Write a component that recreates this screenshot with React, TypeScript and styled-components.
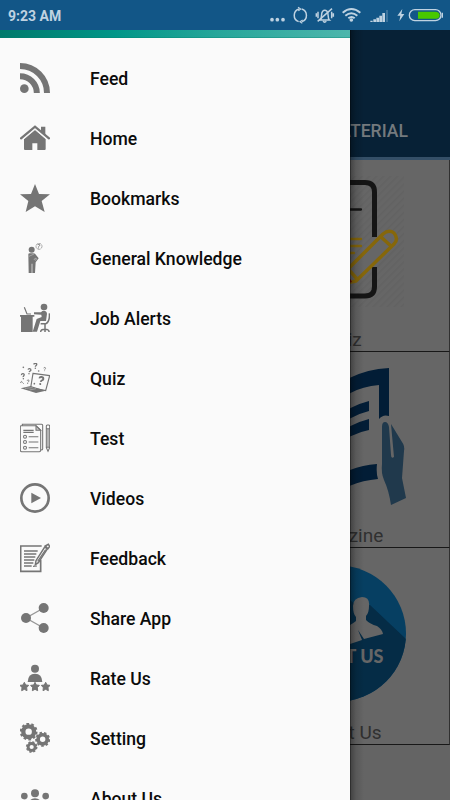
import React from "react";
import styled, { createGlobalStyle } from "styled-components";

const GlobalStyle = createGlobalStyle`
  * { box-sizing: border-box; }
  body { margin: 0; background: #666; font-family: Roboto, "Noto Sans", sans-serif; }
`;

const Screen = styled.div`
  width: 450px;
  height: 800px;
  display: flex;
  flex-direction: column;
  overflow: hidden;
`;

const StatusBar = styled.header`
  height: 30px;
  flex: none;
  display: flex;
  align-items: center;
  justify-content: space-between;
  padding: 0 5px 0 8px;
  background: #125687;
  color: #bfd2e1;
`;

const Clock = styled.span`
  font-size: 14px;
  font-weight: 700;
  line-height: 30px;
  padding-top: 1px;
`;

const StatusIcons = styled.svg`
  width: 175px;
  height: 30px;
  display: block;
`;

const Body = styled.div`
  flex: 1;
  min-height: 0;
  display: flex;
`;

const Drawer = styled.nav`
  width: 350px;
  flex: none;
  background: #fafafa;
  overflow: hidden;
`;

const DrawerHeader = styled.div`
  height: 8px;
  background: linear-gradient(90deg, #00796b 0%, #009688 33%, #26a69a 62%, #4db6ac 100%);
  border-bottom: 1px solid rgba(0, 130, 110, 0.35);
`;

const Menu = styled.ul`
  list-style: none;
  margin: 0;
  padding: 10px 0 0;
`;

const MenuItem = styled.li`
  height: 60px;
  display: flex;
  align-items: center;
  gap: 40px;
  padding-left: 20px;
`;

const MenuIcon = styled.svg`
  width: 30px;
  height: 30px;
  flex: none;
  color: #757575;
  fill: currentColor;
`;

const MenuLabel = styled.span`
  font-size: 17.6px;
  font-weight: 500;
  line-height: 24px;
  color: #0b0b0b;
  padding-top: 2px;
`;

const Page = styled.main`
  position: relative;
  width: 100px;
  flex: none;
  display: flex;
  flex-direction: column;
  align-items: flex-end;
  overflow: hidden;
  background: #646464;

  &::after {
    content: "";
    position: absolute;
    inset: 0 auto 0 0;
    width: 14px;
    background: linear-gradient(90deg, rgba(0, 0, 0, 0.65) 0, rgba(0, 0, 0, 0.3) 1.5px, rgba(0, 0, 0, 0.12) 6px, transparent);
  }
`;

const AppBar = styled.div`
  width: 225px;
  height: 130px;
  flex: none;
  display: flex;
  align-items: flex-end;
  justify-content: flex-end;
  padding: 0 42px 14px 0;
  background: #072136;
  border-bottom: 3px solid #344f67;
`;

const Tab = styled.span`
  font-size: 17.6px;
  font-weight: 500;
  line-height: 24px;
  color: #747a7e;
`;

const Card = styled.section<{ $height: number }>`
  width: 225px;
  height: ${(p) => p.$height}px;
  flex: none;
  display: flex;
  flex-direction: column;
  align-items: center;
  justify-content: flex-end;
  background: #666;
  border-right: 1px solid #303030;
  border-bottom: 1px solid #181818;
`;

const Art = styled.svg`
  width: 150px;
  flex: 1;
  min-height: 0;
  display: block;
`;

const Caption = styled.span<{ $left?: number; $right?: number }>`
  font-size: 19px;
  line-height: 22px;
  color: #303030;
  padding-left: ${(p) => p.$left ?? 0}px;
  padding-right: ${(p) => p.$right ?? 0}px;
`;

const starPoints = "45,3 57,33 90,34 65,54 74,87 45,70 17,87 25,54 0,34 33,33";

const Star = ({ x }: { x: number }) => (
  <path
    transform={`translate(${x} 58)`}
    d="M13 0l4 8 9 1-6 7 1 9-8-4-8 4 1-9-6-7 9-1z"
    stroke="currentColor"
    strokeWidth="3"
    strokeLinejoin="round"
  />
);

const Gear = ({ x, y, r, teeth }: { x: number; y: number; r: number; teeth: number }) => {
  const outer = r * 0.9;
  const pitch = (Math.PI * 2 * outer) / teeth;
  return (
    <g fill="none" stroke="currentColor" transform={`translate(${x} ${y})`}>
      <circle r={r * 0.62} strokeWidth={r * 0.5} />
      <circle r={outer} strokeWidth={r * 0.25} strokeDasharray={`${pitch * 0.55} ${pitch * 0.45}`} />
    </g>
  );
};

const Question = ({ x, y, s, r = 0 }: { x: number; y: number; s: number; r?: number }) => (
  <g transform={`translate(${x} ${y}) rotate(${r}) scale(${s})`}>
    <path d="M-5 -4C-5-10 5-10 5-4C5-1 0 0 0 4" fill="none" stroke="currentColor" strokeWidth="4.6" />
    <circle cx="0" cy="9.5" r="2.6" />
  </g>
);

const items: { label: string; icon: React.ReactNode }[] = [
  {
    label: "Feed",
    icon: (
      <>
        <circle cx="13" cy="77" r="13" />
        <path d="M0 39.5A50.5 50.5 0 0 1 50.5 90M0 9A81 81 0 0 1 81 90" fill="none" stroke="currentColor" strokeWidth="18" />
      </>
    ),
  },
  {
    label: "Home",
    icon: (
      <>
        <path d="M63 11h13v26L63 25zM12 48L45 20l32 28v30q0 3-3 3H52V61H37v20H15q-3 0-3-3z" />
        <path d="M3 46L45 11l42 35" fill="none" stroke="currentColor" strokeWidth="7" strokeLinecap="round" />
        <path d="M8 51L45 20l37 31" fill="none" stroke="#fafafa" strokeWidth="2" />
      </>
    ),
  },
  { label: "Bookmarks", icon: <polygon points={starPoints} /> },
  {
    label: "General Knowledge",
    icon: (
      <>
        <circle cx="35" cy="20" r="9" />
        <path d="M25 34q0-3 4-3h15l12 15-9 12-2 32h-8V62h-2v28h-9z" />
        <path d="M27 40l15-7 5-7M42 49l6-4 2 4-5 3z" fill="none" stroke="#fafafa" strokeWidth="1.5" opacity=".7" />
        <circle cx="57" cy="10" r="9" fill="none" stroke="currentColor" strokeWidth="1.8" strokeDasharray="9 1" />
        <Question x={56} y={9} s={0.6} r={8} />
      </>
    ),
  },
  {
    label: "Job Alerts",
    icon: (
      <>
        <path d="M0 36h43v5h-5v46H3V41H0z" />
        <path d="M13 13l8 20h12" fill="none" stroke="currentColor" strokeWidth="3.5" />
        <circle cx="72" cy="12" r="10" />
        <path d="M67 24q12-3 14 8l-3 22H61L51 86H38l12-38 15-6-1-7-22-1v-6h21z" />
        <path d="M88 31q2 24-10 31H62M75 62v17M62 87q0-8 13-8t12 8M75 79v8" fill="none" stroke="currentColor" strokeWidth="4.5" />
      </>
    ),
  },
  {
    label: "Quiz",
    icon: (
      <>
        <path d="M39 31l50 7-12 45-45-9z" fill="none" stroke="currentColor" strokeWidth="3.5" />
        <path d="M2 76l30-7 45 14-29 7z" />
        <path d="M15 76l23-2M28 81l20-4" stroke="#fafafa" strokeWidth="1" />
        <Question x={63} y={52} s={1.2} r={12} />
        <Question x={46} y={8} s={0.85} />
        <Question x={28} y={24} s={0.85} r={8} />
        <Question x={9} y={39} s={0.85} r={-8} />
        <Question x={74} y={18} s={0.55} />
        <Question x={24} y={56} s={0.6} r={10} />
        <Question x={6} y={59} s={0.5} r={-60} />
        <circle cx="10" cy="13" r="2.5" />
        <circle cx="56" cy="24" r="2.5" />
        <circle cx="43" cy="62" r="2.5" />
      </>
    ),
  },
  {
    label: "Test",
    icon: (
      <g fill="none" stroke="currentColor" strokeWidth="3.2">
        <path d="M7 7V4h58q3 0 3 3v71q0 3-5 3M3 8h45l14 14v60q0 4-4 4H5q-4 0-4-4V12q0-4 2-4z" />
        <path d="M48 8v14h14z" fill="currentColor" fillOpacity=".35" />
        <path d="M10 22h31M10 28h31" strokeWidth="4" />
        <path d="M26 41h29M26 57h29M26 74h29" />
        <circle cx="15" cy="41" r="4.5" />
        <circle cx="15" cy="57" r="4.5" />
        <circle cx="15" cy="74" r="4.5" />
        <path d="M79 14V9q0-3 3-3h4q3 0 3 3v65l-5 11-5-11zM79 17h10M79 73h10M84 18v54" />
      </g>
    ),
  },
  {
    label: "Videos",
    icon: (
      <>
        <circle cx="45" cy="45" r="41" fill="none" stroke="currentColor" strokeWidth="8" />
        <path d="M34 29v32l29-16z" />
      </>
    ),
  },
  {
    label: "Feedback",
    icon: (
      <g fill="none" stroke="currentColor">
        <path d="M65 9H2v76h60V50" strokeWidth="5" />
        <path d="M12 24h41M12 33h37M12 42h34M12 51h31M12 60h28M12 69h23" strokeWidth="4.5" />
        <path d="M76 9l9-5 4 6-5 7zM74 12l8 6-27 41-9 6 2-12z" fill="#fafafa" strokeWidth="4.5" />
        <path d="M77 20L53 55M39 70l12-1" strokeWidth="3.5" />
      </g>
    ),
  },
  {
    label: "Share App",
    icon: (
      <>
        <path d="M71 15L18 45l53 30" fill="none" stroke="currentColor" strokeWidth="4" opacity=".75" />
        <circle cx="71" cy="15" r="15" />
        <circle cx="18" cy="45" r="15" />
        <circle cx="71" cy="75" r="15" />
      </>
    ),
  },
  {
    label: "Rate Us",
    icon: (
      <>
        <circle cx="45" cy="17" r="12" />
        <path d="M23 57q1-25 22-25t22 25z" />
        <Star x={0} />
        <Star x={32} />
        <Star x={64} />
      </>
    ),
  },
  {
    label: "Setting",
    icon: (
      <>
        <Gear x={26} y={26} r={26} teeth={10} />
        <Gear x={68} y={49} r={22} teeth={9} />
        <Gear x={35} y={72} r={17} teeth={8} />
      </>
    ),
  },
  {
    label: "About Us",
    icon: (
      <>
        <circle cx="45" cy="31" r="12" />
        <circle cx="13" cy="39" r="10" />
        <circle cx="77" cy="39" r="10" />
        <path d="M23 76q0-30 22-30t22 30zM0 72q0-22 14-22 7 0 10 4-6 8-6 18zM90 72q0-22-14-22-7 0-10 4 6 8 6 18z" />
      </>
    ),
  },
];

const StatusGlyphs = () => (
  <StatusIcons viewBox="0 0 525 90" fill="none" stroke="#bfd2e1" strokeWidth="4">
    <g fill="#bfd2e1" stroke="none">
      <circle cx="6" cy="59" r="5.5" />
      <circle cx="22" cy="59" r="5.5" />
      <circle cx="39" cy="59" r="5.5" />
      <path d="M397 27l-15 20h9l-3 17 15-22h-9z" />
      <path d="M301 62h7v4h-7zM310 58h8v8h-8zM319 53h8v13h-8zM328 47h8v19h-8zM337 39h8v27h-8z" />
      <circle cx="244" cy="60" r="5.5" />
    </g>
    <path d="M348 30h6v36h-6z" fill="#3c749d" stroke="none" />
    <path d="M87 27A20 20 0 0 0 86 65M96 65A20 20 0 0 0 95 27" strokeWidth="4.5" />
    <path d="M84 22l8 5-7 5M98 60l-8 5 7 5" strokeWidth="3.5" />
    <path d="M151 60c6-5 1-20 7-26q6-7 13 0c6 6 1 21 7 26zM159 64q5 5 10 0M144 35v20M185 35v20M139 40v10M190 40v10" strokeWidth="4.5" />
    <path d="M143 64l43-38" strokeWidth="4.5" />
    <path d="M218 38q26-22 53 0M226 47q18-15 36 0M235 55q10-8 19 0" strokeWidth="6" />
    <rect x="418" y="29" width="95" height="33" rx="16.5" />
    <path d="M444 35h51q14 0 14 11t-14 10h-51z" fill="#48c800" stroke="none" />
    <path d="M517 38v15" />
  </StatusIcons>
);

const QuizArt = () => (
  <Art viewBox="262 160 150 169">
    <defs>
      <pattern id="hatch" width="5" height="5" patternUnits="userSpaceOnUse" patternTransform="rotate(45)">
        <path d="M0 0v5" stroke="#626262" strokeWidth="3" />
      </pattern>
    </defs>
    <path d="M270 176h134v131H270z" fill="url(#hatch)" />
    <path d="M374.5 237v-45q0-9.500-9.500-9.500H305q-10 0-10 10V286q0 10 10 10h60q9.500 0 9.500-9.500V267" fill="none" stroke="#151515" strokeWidth="5" />
    <path d="M325 209.500h36" stroke="#151515" strokeWidth="2.300" strokeLinecap="round" />
    <path d="M330 239h31M330 246h31M330 253h24" stroke="#86670a" strokeWidth="2.300" strokeLinecap="round" />
    <path d="M348 269l35-35q6-5 11-1 5 6 0 11l-38 37-10 2zM381 237l10 9M349 270l9 10" fill="#666" stroke="#86670a" strokeWidth="3.400" strokeLinejoin="round" />
    <path d="M347 273l5 9-8 3z" fill="#7b0b0b" />
  </Art>
);

const MagazineArt = () => (
  <Art viewBox="262 352 150 173">
    <g fill="#021d36">
      <path d="M335 387q22-17 54-19v48q-6-2-10 3v-34q-26 2-44 19zM335 419q14-13 34-18v10q-17 4-34 18zM335 437q14-13 34-18v11q-17 3-34 16zM335 477q19-11 42-13-1 9 1 15-24 2-43 15z" />
    </g>
    <path d="M382 427q0-5 3-5t4 5l2 28q0 4 3 2l-3-33 11 18q3 4 2 9l-2 27 4 20-15 7q-2-14-7-25-3-7-2-16z" fill="#20394c" />
  </Art>
);

const ContactArt = () => (
  <Art viewBox="262 548 150 174">
    <defs>
      <clipPath id="disc">
        <circle cx="338" cy="633.500" r="68" />
      </clipPath>
    </defs>
    <g clipPath="url(#disc)">
      <path d="M270 565h137v137H270z" fill="#063f62" />
      <path d="M270 600h80l6 5h14l37 35v63H270z" fill="#052c46" />
    </g>
    <path d="M362 597q8 0 7 9 0 7-3 10v4q4 4 11 6 5 3 6 8l-19 5-6-9 4 10-18 6q-5 0-5-8 0-9 7-11 5-2 10-6v-4q-3-3-3-11 0-8 9-9z" fill="#666" />
    <text x="383.500" y="662.500" textAnchor="end" fontFamily="Lato" fontSize="18" fontWeight="900" fill="#666">
      CONTACT US
    </text>
  </Art>
);

export default function App() {
  return (
    <Screen>
      <GlobalStyle />
      <StatusBar>
        <Clock>9:23 AM</Clock>
        <StatusGlyphs />
      </StatusBar>
      <Body>
        <Drawer>
          <DrawerHeader />
          <Menu>
            {items.map((item) => (
              <MenuItem key={item.label}>
                <MenuIcon viewBox="0 0 90 90">{item.icon}</MenuIcon>
                <MenuLabel>{item.label}</MenuLabel>
              </MenuItem>
            ))}
          </Menu>
        </Drawer>
        <Page>
          <AppBar>
            <Tab>MATERIAL</Tab>
          </AppBar>
          <Card $height={192}>
            <QuizArt />
            <Caption $left={12}>Quiz</Caption>
          </Card>
          <Card $height={196}>
            <MagazineArt />
            <Caption $left={10}>Magazine</Caption>
          </Card>
          <Card $height={197}>
            <ContactArt />
            <Caption $right={4}>Contact Us</Caption>
          </Card>
        </Page>
      </Body>
    </Screen>
  );
}
